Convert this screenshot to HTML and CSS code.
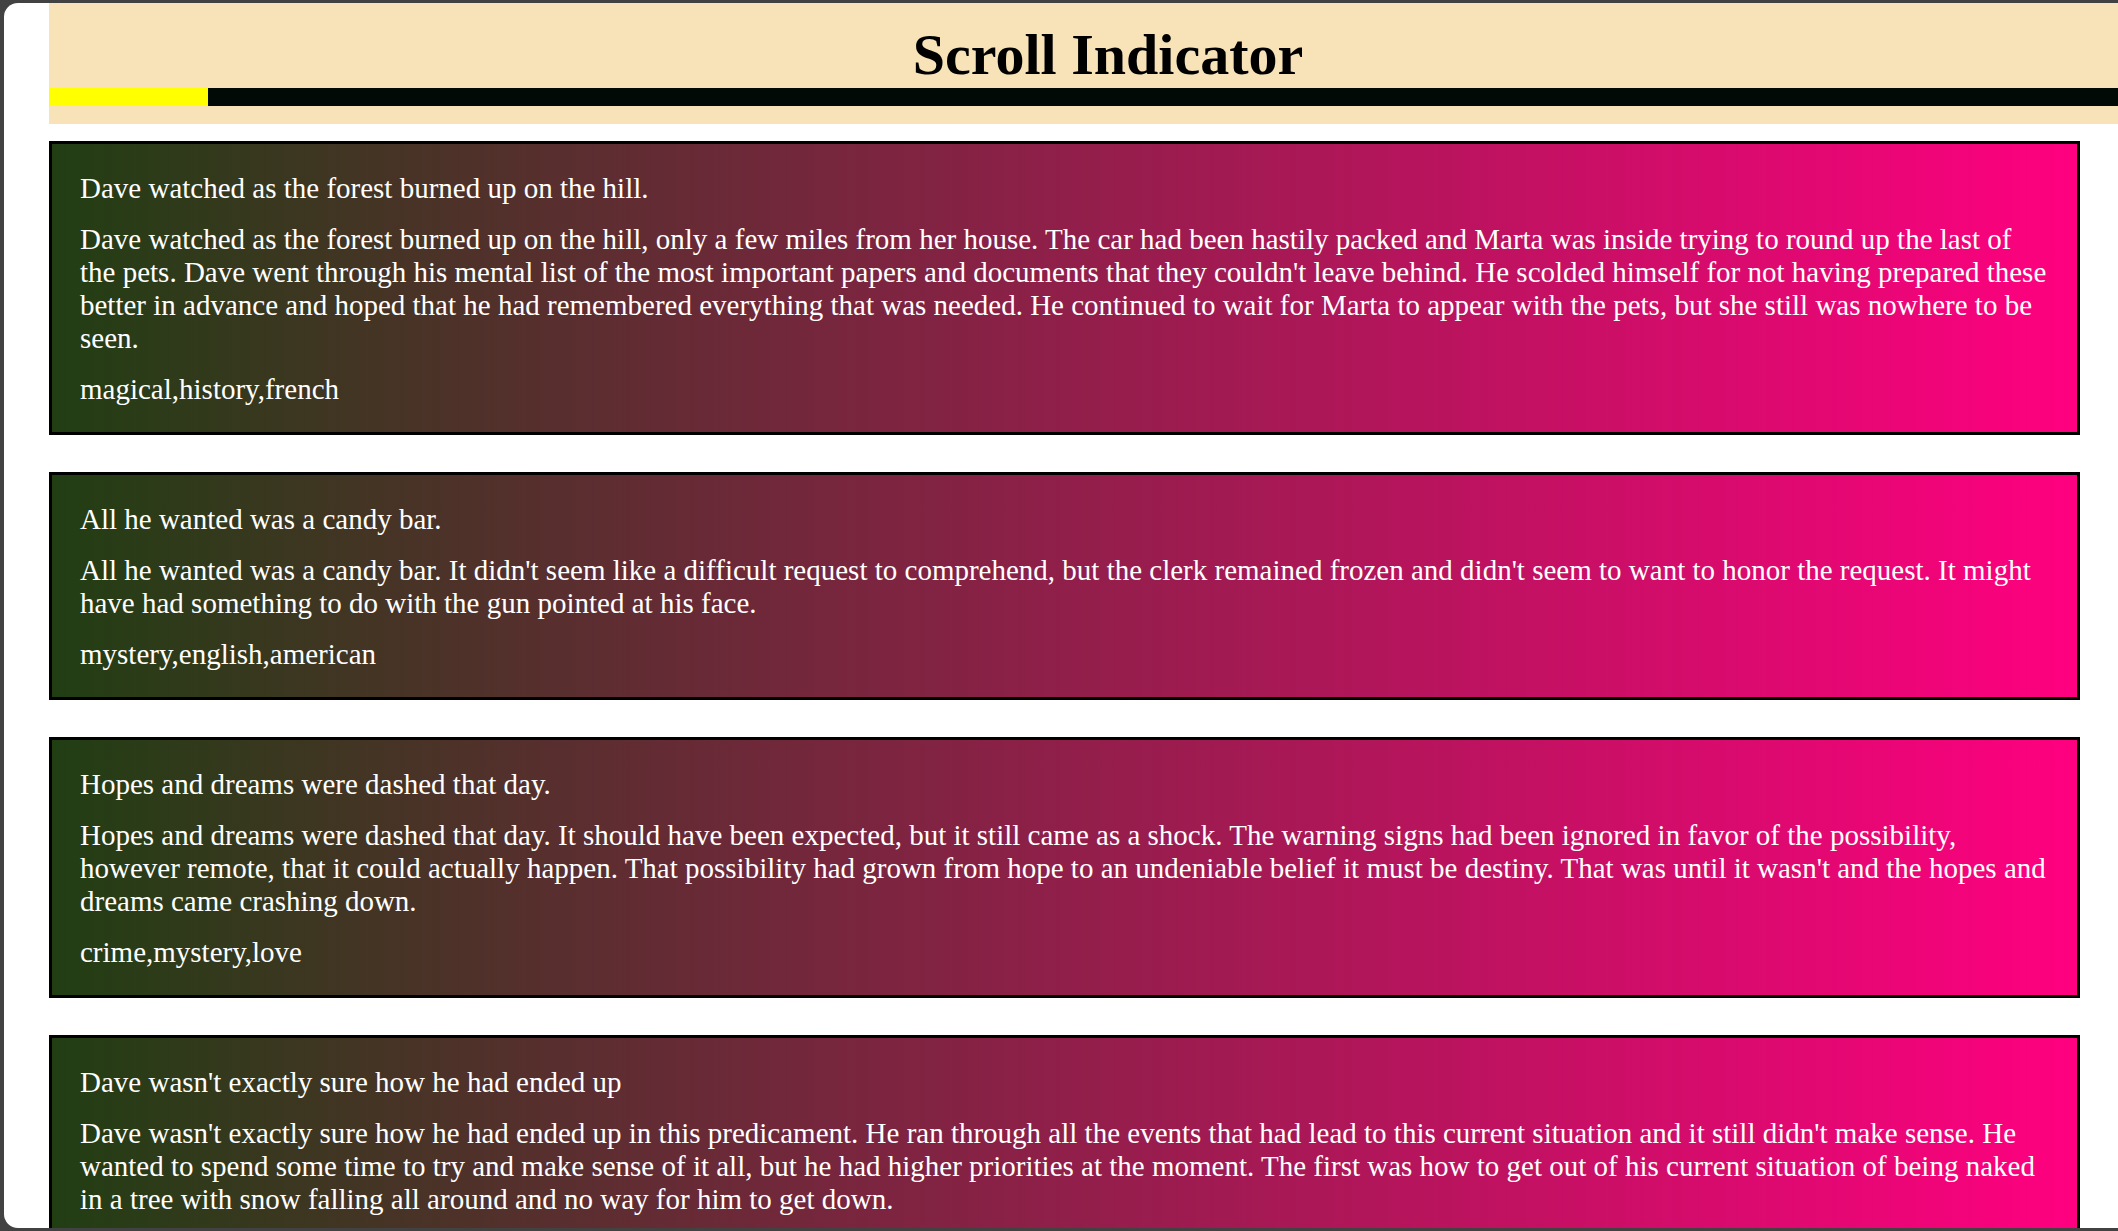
FILE: index.html
```html
<!DOCTYPE html>
<html lang="en">
<head>
<meta charset="utf-8">
<title>Scroll Indicator</title>
<link rel="stylesheet" href="styles.css">
</head>
<body>
<div class="window">
  <header class="header">
    <h1 class="title">Scroll Indicator</h1>
    <div class="progress"><div class="progress-fill" style="width:159px"></div></div>
  </header>
  <main class="cards">
    <article class="card">
      <p>Dave watched as the forest burned up on the hill.</p>
      <p>Dave watched as the forest burned up on the hill, only a few miles from her house. The car had been hastily packed and Marta was inside trying to round up the last of the pets. Dave went through his mental list of the most important papers and documents that they couldn't leave behind. He scolded himself for not having prepared these better in advance and hoped that he had remembered everything that was needed. He continued to wait for Marta to appear with the pets, but she still was nowhere to be seen.</p>
      <p>magical,history,french</p>
    </article>
    <article class="card">
      <p>All he wanted was a candy bar.</p>
      <p>All he wanted was a candy bar. It didn't seem like a difficult request to comprehend, but the clerk remained frozen and didn't seem to want to honor the request. It might have had something to do with the gun pointed at his face.</p>
      <p>mystery,english,american</p>
    </article>
    <article class="card">
      <p>Hopes and dreams were dashed that day.</p>
      <p>Hopes and dreams were dashed that day. It should have been expected, but it still came as a shock. The warning signs had been ignored in favor of the possibility, however remote, that it could actually happen. That possibility had grown from hope to an undeniable belief it must be destiny. That was until it wasn't and the hopes and dreams came crashing down.</p>
      <p>crime,mystery,love</p>
    </article>
    <article class="card">
      <p>Dave wasn't exactly sure how he had ended up</p>
      <p>Dave wasn't exactly sure how he had ended up in this predicament. He ran through all the events that had lead to this current situation and it still didn't make sense. He wanted to spend some time to try and make sense of it all, but he had higher priorities at the moment. The first was how to get out of his current situation of being naked in a tree with snow falling all around and no way for him to get down.</p>
    </article>
  </main>
</div>
</body>
</html>
```
FILE: styles.css
```css
html, body {
  margin: 0;
  padding: 0;
  height: 100%;
  overflow: hidden;
}

body {
  background: #424242;
  font-family: "Liberation Serif", "Times New Roman", serif;
}

.window {
  margin: 3px 0 3px 4px;
  height: calc(100vh - 6px);
  background: #ffffff;
  border-radius: 14px 0 0 14px;
  overflow: hidden;
}

.header {
  margin-left: 45px;
  width: 100vw;
  background: #f8e3b8;
  padding: 19px 0 18px;
}

.title {
  margin: 0;
  font-size: 58px;
  line-height: 66px;
  font-weight: bold;
  text-align: center;
  color: #000000;
}

.progress {
  height: 18px;
  background: #020a06;
}

.progress-fill {
  height: 100%;
  background: #ffff00;
}

.cards {
  margin-left: 45px;
  width: 2031px;
  padding-top: 17px;
  display: flex;
  flex-direction: column;
  gap: 37px;
}

.card {
  border: 3px solid #000000;
  background: linear-gradient(to right, #213e13, #ff0080);
  padding: 27.5px 26px 26.5px 28px;
  color: #ffffff;
  font-size: 29px;
  line-height: 33px;
}

.card p {
  margin: 0 0 18px;
}

.card p:last-child {
  margin-bottom: 0;
}
```
